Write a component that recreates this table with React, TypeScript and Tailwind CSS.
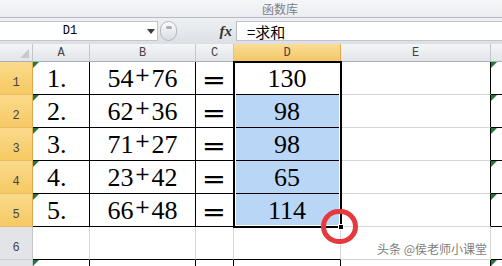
import React from "react";

const serif = "font-['Liberation_Serif','Times_New_Roman',serif]";
const mono = "font-['Liberation_Mono',monospace]";
const cjk = "font-['Noto_Sans_CJK_SC','Noto_Sans',sans-serif]";

const data = [
  ["1.", "54", "76", "130"],
  ["2.", "62", "36", "98"],
  ["3.", "71", "27", "98"],
  ["4.", "23", "42", "65"],
  ["5.", "66", "48", "114"],
];

function Tri() {
  return (
    <svg className="absolute left-0 top-0" width="6" height="6" viewBox="0 0 6 6">
      <polygon points="0,0 6,0 0,6" fill="#1f7a35" />
    </svg>
  );
}

function RowHeader({ n, selected }: { n?: number; selected: boolean }) {
  return (
    <div
      className={`w-[33px] h-[33px] shrink-0 flex items-end justify-center pb-[5px] border-r border-b text-[12px] leading-none ${mono} ${
        selected
          ? "bg-gradient-to-b from-[#FADB8C] to-[#F6C962] border-r-[#E4A94A] border-b-[#E9BB62] text-[#444]"
          : "bg-[#E2E4E8] border-r-[#C3C7CD] border-b-[#C9CDD2] text-[#444]"
      }`}
    >
      {n}
    </div>
  );
}

function DataRow({ i, row }: { i: number; row: string[] }) {
  const blue = i > 0;
  return (
    <div className="flex h-[33px]">
      <RowHeader n={i + 1} selected />
      <div className={`relative w-[57px] shrink-0 border-r border-b border-black flex items-center pl-[14px] pt-[2px] ${serif} text-[26px] leading-none text-black`}>
        <Tri />
        {row[0]}
      </div>
      <div className={`w-[106px] shrink-0 border-r border-b border-black flex items-center justify-center pt-[2px] ${serif} text-[26px] leading-none text-black`}>
        <span>{row[1]}</span>
        <span className="relative -top-[5px] mx-[1px] font-['DejaVu_Serif',serif] text-[19px] leading-none">+</span>
        <span>{row[2]}</span>
      </div>
      <div className={`w-[38px] shrink-0 border-r border-b border-black flex items-center justify-center pt-[2px] ${cjk} text-[22px] font-bold leading-none text-black`}>
        <span className="inline-block scale-x-[1.15]">＝</span>
      </div>
      <div
        className={`w-[107px] shrink-0 border-r border-b border-black flex items-center justify-center pt-[2px] ${serif} text-[26px] leading-none text-black ${
          blue ? "bg-[#B9D6F6]" : "bg-white"
        }`}
      >
        {row[3]}
      </div>
      <div className="w-[150px] shrink-0 border-r border-r-black border-b border-b-[#D6D6D6]" />
      <div className="relative w-[11px] shrink-0 border-b border-black">
        <Tri />
      </div>
    </div>
  );
}

export default function App() {
  return (
    <div className="relative w-[502px] h-[266px] overflow-hidden bg-white">
      {/* ribbon group label */}
      <div className="h-[18px] bg-gradient-to-b from-[#F5F6F8] to-[#EBEDF0] border-b border-[#B7BCC3] pl-[262px] flex items-center">
        <span className={`${cjk} text-[12px] leading-none text-[#7B8088]`}>函数库</span>
      </div>

      {/* formula bar */}
      <div className="h-[26px] bg-gradient-to-b from-[#EEF0F3] to-[#DCE0E5] flex items-center">
        <div className="w-[158px] h-[20px] bg-white border border-[#C2C6CC] border-l-0 flex items-center">
          <div className={`w-[140px] text-center ${mono} text-[12px] leading-none text-black`}>D1</div>
          <svg width="8" height="5" viewBox="0 0 8 5" className="ml-[7px]">
            <polygon points="0,0 8,0 4,5" fill="#3c3c3c" />
          </svg>
        </div>
        <div className="ml-[2px] w-[17px] h-[20px] rounded-full border border-[#B3B8BF] bg-gradient-to-b from-[#FBFBFC] to-[#D9DDE2] flex justify-center pt-[4px]">
          <div className="w-[6px] h-[3px] rounded-full bg-[#A9AEB5]" />
        </div>
        <div className="flex-1" />
        <span className={`${serif} italic font-bold text-[15px] leading-none text-[#333] mr-[4px]`}>fx</span>
        <div className="w-px h-[20px] bg-[#B9BEC5]" />
        <div className="w-[265px] h-[20px] bg-white border-y border-[#C2C6CC] flex items-center pl-[10px]">
          <span className={`${cjk} text-[15px] leading-none text-black`}>=求和</span>
        </div>
      </div>

      {/* column headers */}
      <div className={`flex h-[18px] ${mono} text-[12px] leading-none text-[#444]`}>
        <div className="relative w-[33px] shrink-0 bg-gradient-to-b from-[#F4F5F7] to-[#E2E5E9] border-r border-b border-r-[#C3C7CD] border-b-[#A8AFB7]">
          <svg className="absolute right-[3px] bottom-[3px]" width="9" height="9" viewBox="0 0 9 9">
            <polygon points="9,0 9,9 0,9" fill="#C6CACF" />
          </svg>
        </div>
        <div className="w-[57px] shrink-0 flex items-center justify-center bg-gradient-to-b from-[#F4F5F7] to-[#E2E5E9] border-r border-b border-r-[#C3C7CD] border-b-[#A8AFB7]">A</div>
        <div className="w-[106px] shrink-0 flex items-center justify-center bg-gradient-to-b from-[#F4F5F7] to-[#E2E5E9] border-r border-b border-r-[#C3C7CD] border-b-[#A8AFB7]">B</div>
        <div className="w-[38px] shrink-0 flex items-center justify-center bg-gradient-to-b from-[#F4F5F7] to-[#E2E5E9] border-r border-b border-r-[#C3C7CD] border-b-[#A8AFB7]">C</div>
        <div className="w-[107px] shrink-0 flex items-center justify-center bg-gradient-to-b from-[#FADC95] to-[#F4C765] border-r border-b border-r-[#E0A84A] border-b-[#E9A23B]">D</div>
        <div className="w-[150px] shrink-0 flex items-center justify-center bg-gradient-to-b from-[#F4F5F7] to-[#E2E5E9] border-r border-b border-r-[#C3C7CD] border-b-[#A8AFB7]">E</div>
        <div className="w-[11px] shrink-0 bg-gradient-to-b from-[#F4F5F7] to-[#E2E5E9] border-b border-b-[#A8AFB7]" />
      </div>

      {/* rows 1-5 */}
      {data.map((row, i) => (
        <DataRow key={i} i={i} row={row} />
      ))}

      {/* row 6 */}
      <div className="flex h-[33px]">
        <RowHeader n={6} selected={false} />
        <div className="w-[57px] shrink-0 border-r border-r-[#D6D6D6] border-b border-b-black" />
        <div className="w-[106px] shrink-0 border-r border-r-[#D6D6D6] border-b border-b-black" />
        <div className="w-[38px] shrink-0 border-r border-r-[#D6D6D6] border-b border-b-black" />
        <div className="w-[107px] shrink-0 border-r border-r-[#D6D6D6] border-b border-b-black" />
        <div className="w-[150px] shrink-0 border-r border-r-[#D6D6D6] border-b border-b-[#D6D6D6]" />
        <div className="w-[11px] shrink-0 border-b border-b-black" />
      </div>

      {/* row 7 (partial, number not visible) */}
      <div className="flex h-[33px]">
        <RowHeader selected={false} />
        <div className="relative w-[57px] shrink-0 border-r border-black">
          <Tri />
        </div>
        <div className="w-[106px] shrink-0 border-r border-black" />
        <div className="w-[38px] shrink-0 border-r border-black" />
        <div className="w-[107px] shrink-0 border-r border-black" />
        <div className="w-[150px] shrink-0 border-r border-black" />
        <div className="relative w-[11px] shrink-0">
          <Tri />
        </div>
      </div>

      {/* selection border over D1:D5 */}
      <div className="absolute left-[233px] top-[61px] w-[109px] h-[167px] border-2 border-black shadow-[inset_0_0_0_1px_#ffffff] pointer-events-none" />
      {/* fill handle */}
      <div className="absolute left-[338px] top-[224px] w-[6px] h-[6px] bg-black border border-white" />
      {/* red ring */}
      <div className="absolute left-[321px] top-[209px] w-[37px] h-[35px] rounded-full border-[5px] border-[#E5393E]" />

      {/* watermark */}
      <div className={`absolute left-[377px] top-[243px] ${cjk} text-[12px] leading-none text-[#7d7d7d] [text-shadow:0_0_2px_#fff]`}>
        头条 @侯老师小课堂
      </div>
    </div>
  );
}
